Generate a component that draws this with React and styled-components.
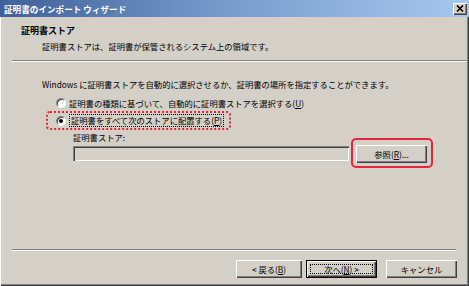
import React from 'react'
import styled, { createGlobalStyle } from 'styled-components'

const GlobalStyle = createGlobalStyle`
    * { box-sizing: border-box; }
    body {
        margin: 0;
        background: #d4d0c8;
        font-family: "Noto Sans CJK JP", "Noto Sans", sans-serif;
    }
`

const Window = styled.div`
    width: 469px;
    height: 286px;
    display: flex;
    flex-direction: column;
    background: #d4d0c8;
    box-shadow: inset 1px 0 #ffffff, inset -1px -1px #404040, inset -2px -2px #808080;
    font-size: 8.3px;
    color: #000;
`

const TitleBar = styled.div`
    height: 17px;
    flex: none;
    display: flex;
    align-items: center;
    justify-content: space-between;
    padding: 0 2px 0 4px;
    background: linear-gradient(90deg, #3f6099 0%, #7b9dce 50%, #a6c8ee 100%);
`

const TitleText = styled.span`
    color: #fff;
    font-weight: bold;
    font-size: 8.6px;
    line-height: 12px;
    white-space: nowrap;
`

const CloseButton = styled.div`
    width: 14px;
    height: 12px;
    display: flex;
    align-items: center;
    justify-content: center;
    background: #d4d0c8;
    box-shadow: inset 1px 1px #ffffff, inset -1px -1px #404040, inset -2px -2px #808080;
`

const Header = styled.div`
    padding: 8px 0 0 21px;
`

const HeaderTitle = styled.div`
    font-weight: bold;
    font-size: 9px;
    line-height: 12px;
`

const HeaderSub = styled.div`
    margin: 3px 0 0 21px;
    line-height: 12px;
`

const Divider = styled.div`
    height: 2px;
    flex: none;
    margin: ${p => p.$top}px ${p => p.$right}px 0 12px;
    border-top: 1px solid #808080;
    border-bottom: 1px solid #ffffff;
`

const Body = styled.div`
    flex: 1;
    padding: 16px 0 0 42px;
`

const Line = styled.div`
    line-height: 12px;
    white-space: nowrap;
`

const RadioGroup = styled.div`
    margin: 7px 0 0 14px;
    display: flex;
    flex-direction: column;
    align-items: flex-start;
    gap: 2px;
`

const RadioRow = styled.div`
    display: flex;
    align-items: center;
    gap: 3px;
    line-height: 12px;
    white-space: nowrap;
`

const Radio = styled.span`
    width: 10px;
    height: 10px;
    flex: none;
    border-radius: 50%;
    background: #ffffff;
    border: 1px solid;
    border-color: #808080 #ffffff #ffffff #808080;
    box-shadow: inset 1px 1px 0 #404040;
    display: flex;
    align-items: center;
    justify-content: center;

    &::after {
        content: '';
        width: 4px;
        height: 4px;
        border-radius: 50%;
        background: ${p => (p.$checked ? '#000' : 'transparent')};
    }
`

const FocusText = styled.span`
    border: 1px dotted #000;
    padding: 0 1px;
    line-height: 11px;
`

const FocusBox = styled.span`
    width: calc(100% - 8px);
    height: calc(100% - 8px);
    display: flex;
    align-items: center;
    justify-content: center;
    border: 1px dotted #000;
`

const Mark = styled.div`
    display: inline-flex;
    border: 2px ${p => p.$style} #e3263a;
    border-radius: ${p => p.$radius}px;
`

const RadioMark = styled(Mark)`
    margin-left: -10px;
    padding: 1px 5px 1px 8px;
`

const ButtonMark = styled(Mark)`
    margin: 7px 0 0 2px;
    padding: 5px 4px 3px 3px;
`

const StoreRow = styled.div`
    display: flex;
    align-items: flex-start;
    margin: 1px 0 0 31px;
`

const StoreField = styled.div`
    display: flex;
    flex-direction: column;
    gap: 3px;
`

const Input = styled.div`
    width: 276px;
    height: 15px;
    background: #d4d0c8;
    box-shadow: inset 1px 1px #808080, inset 2px 2px #404040, inset -1px -1px #ffffff, inset -2px -2px #d4d0c8;
`

const Button = styled.div`
    width: ${p => p.$w}px;
    height: 18px;
    display: flex;
    align-items: center;
    justify-content: center;
    background: #d4d0c8;
    line-height: 12px;
    white-space: nowrap;
    box-shadow: ${p =>
        p.$default
            ? 'inset 0 0 0 1px #000, inset 2px 2px #fff, inset -2px -2px #404040, inset -3px -3px #808080'
            : 'inset 1px 1px #fff, inset -1px -1px #404040, inset -2px -2px #808080'};
`

const Footer = styled.div`
    display: flex;
    justify-content: flex-end;
    padding: 9px 12px 8px 0;
`

const ButtonGap = styled.div`
    width: ${p => p.$w}px;
`

const App = () => {
    return (
        <Window>
            <GlobalStyle />
            <TitleBar>
                <TitleText>証明書のインポート ウィザード</TitleText>
                <CloseButton>
                    <svg width="8" height="7" viewBox="0 0 8 7">
                        <path d="M1 0.5 L7 6.5 M7 0.5 L1 6.5" stroke="#000" strokeWidth="1.6" />
                    </svg>
                </CloseButton>
            </TitleBar>
            <Header>
                <HeaderTitle>証明書ストア</HeaderTitle>
                <HeaderSub>証明書ストアは、証明書が保管されるシステム上の領域です。</HeaderSub>
            </Header>
            <Divider $top={8} $right={3} />
            <Body>
                <Line>Windows に証明書ストアを自動的に選択させるか、証明書の場所を指定することができます。</Line>
                <RadioGroup>
                    <RadioRow>
                        <Radio />
                        <span>証明書の種類に基づいて、自動的に証明書ストアを選択する(<u>U</u>)</span>
                    </RadioRow>
                    <RadioMark $style="dotted" $radius={4}>
                        <RadioRow>
                            <Radio $checked />
                            <FocusText>証明書をすべて次のストアに配置する(<u>P</u>)</FocusText>
                        </RadioRow>
                    </RadioMark>
                </RadioGroup>
                <StoreRow>
                    <StoreField>
                        <Line>証明書ストア:</Line>
                        <Input />
                    </StoreField>
                    <ButtonMark $style="solid" $radius={5}>
                        <Button $w={71}>参照(<u>R</u>)...</Button>
                    </ButtonMark>
                </StoreRow>
            </Body>
            <Divider $top={0} $right={13} />
            <Footer>
                <Button $w={66}>&lt; 戻る(<u>B</u>)</Button>
                <ButtonGap $w={4} />
                <Button $w={71} $default>
                    <FocusBox>次へ(<u>N</u>) &gt;</FocusBox>
                </Button>
                <ButtonGap $w={9} />
                <Button $w={71}>キャンセル</Button>
            </Footer>
        </Window>
    )
}

export default App
